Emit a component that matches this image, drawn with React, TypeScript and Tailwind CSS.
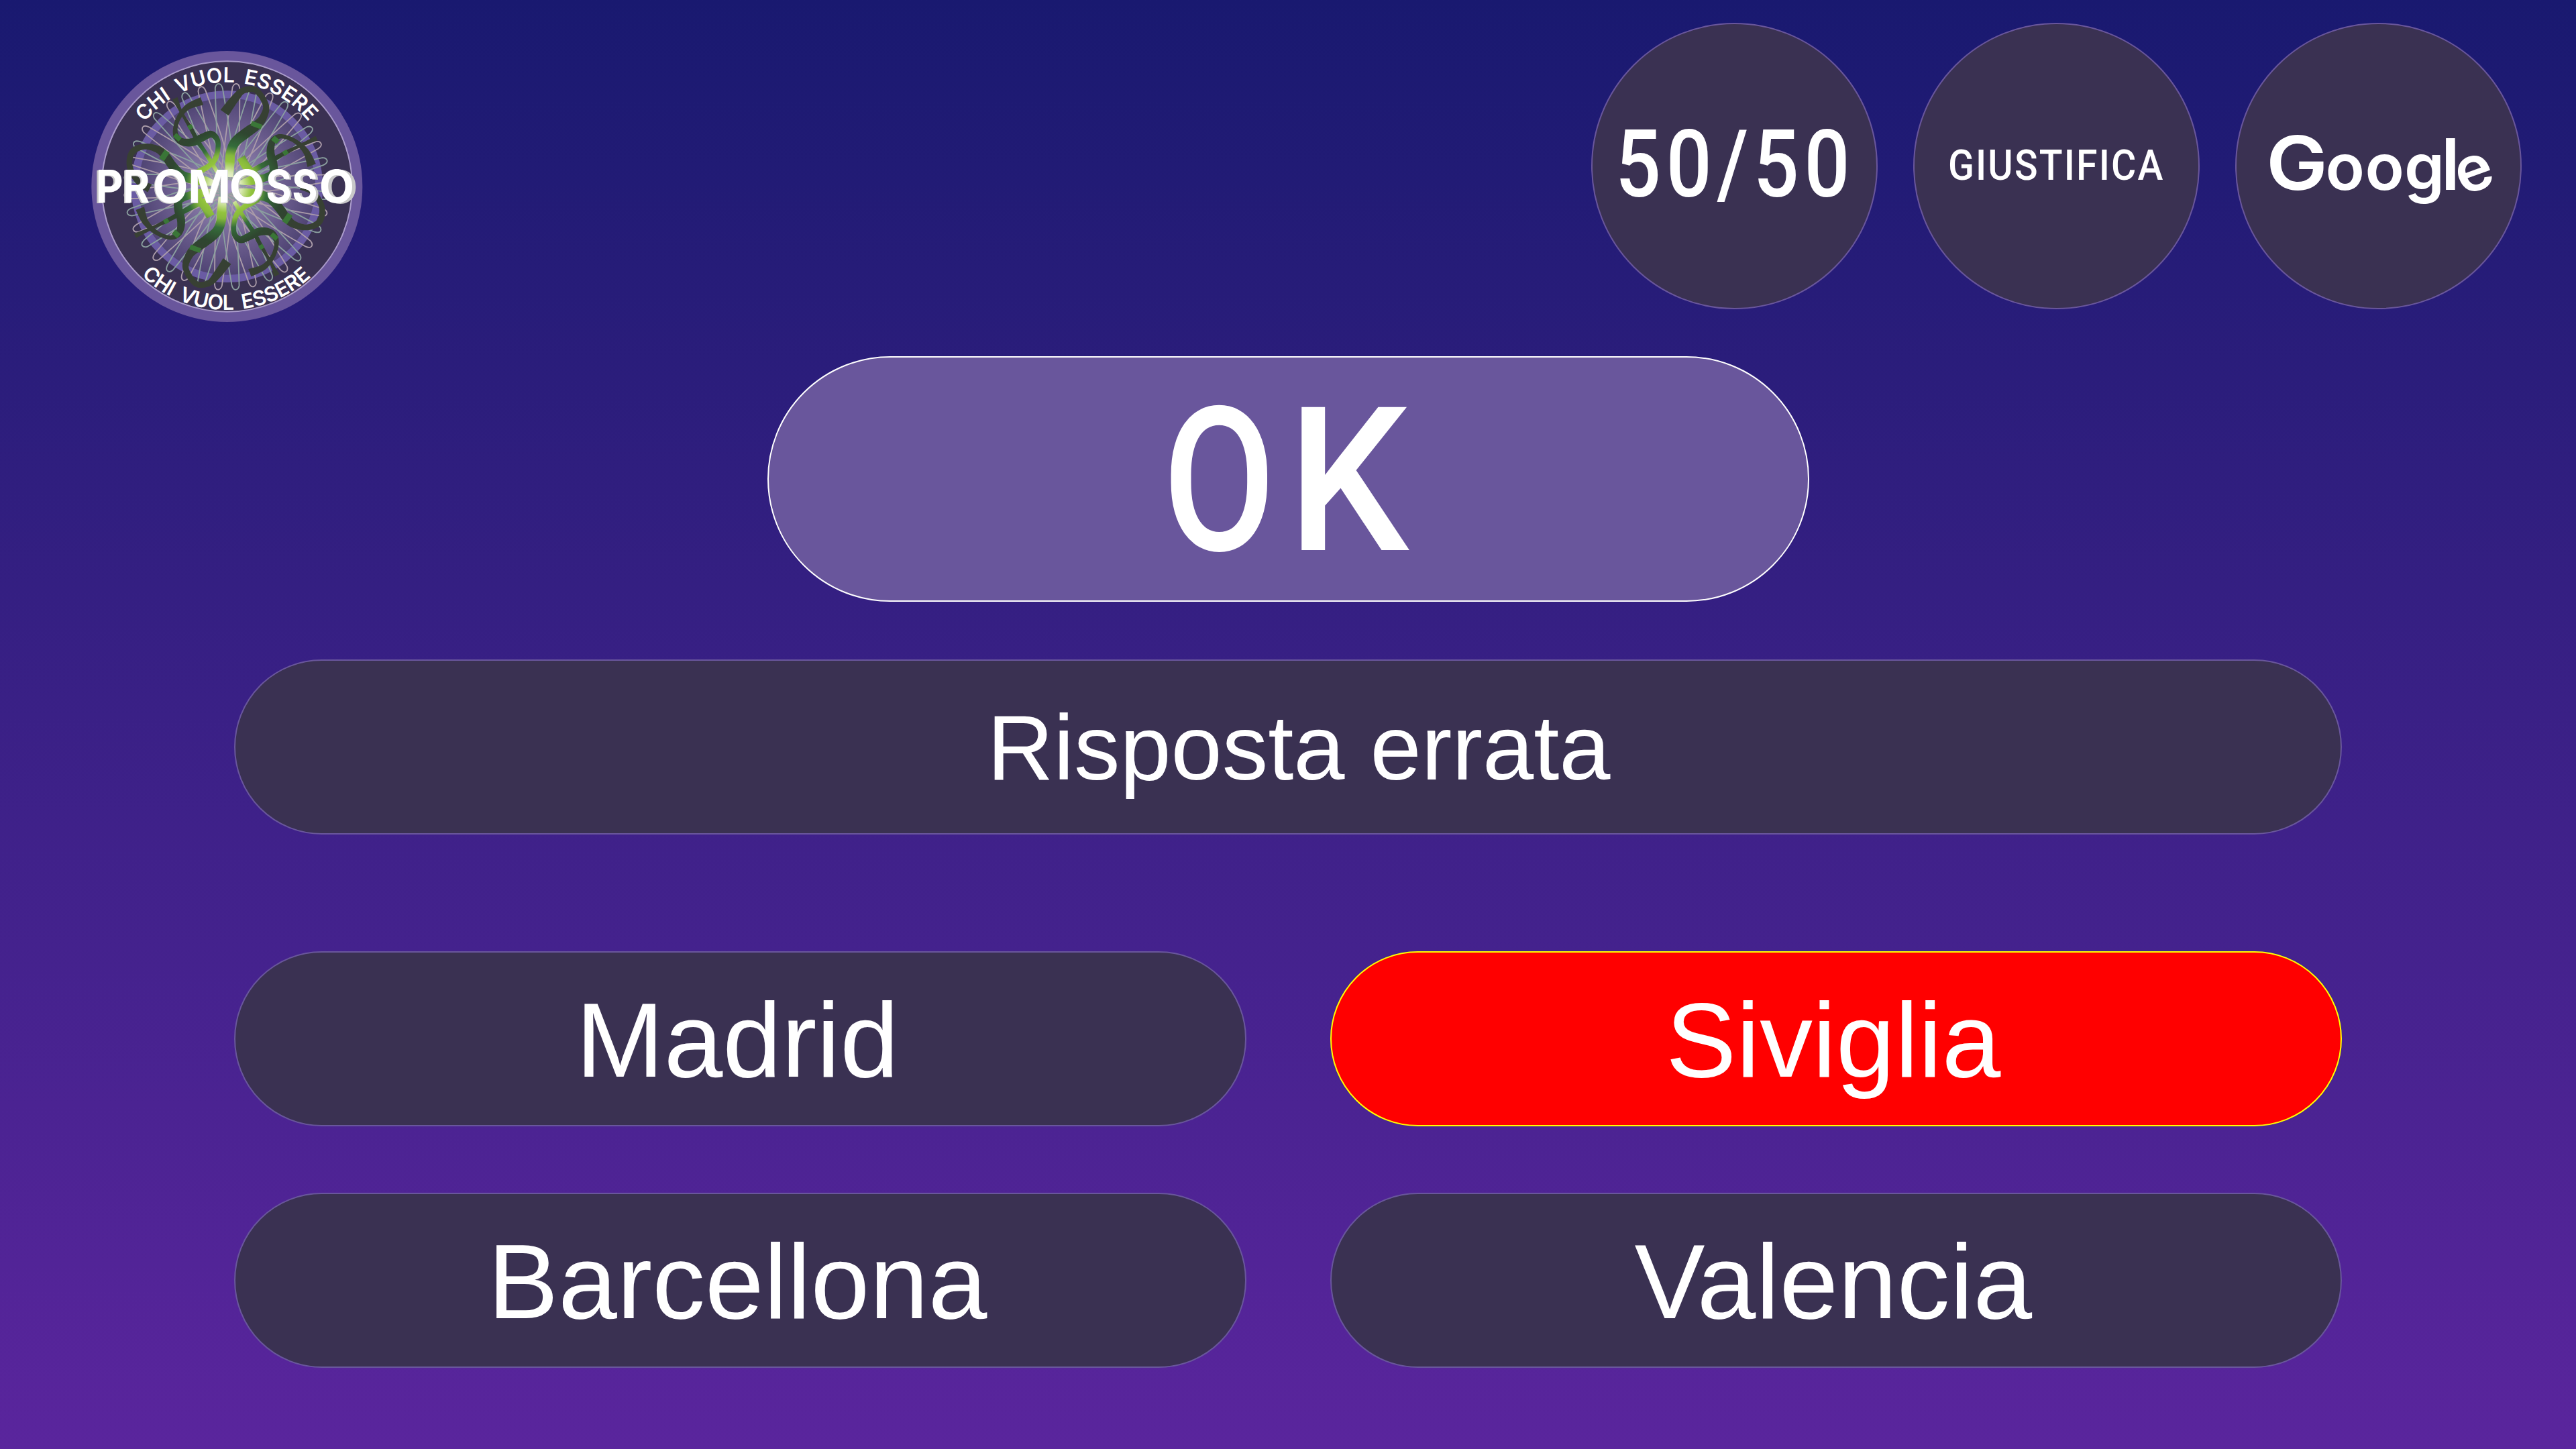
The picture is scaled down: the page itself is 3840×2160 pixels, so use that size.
import type { ReactNode } from "react";

const PETALS = Array.from({ length: 18 }, (_, i) => i);

type Knot = [x: number, y: number, width: number];

/* Half of the emblem's ribbons; the other half is the same set turned by 180 degrees. */
const RIBBONS: Knot[][] = [
  [[644, 324, 44], [690, 262, 36], [728, 225, 28], [785, 224, 26], [829, 290, 27], [817, 345, 34], [788, 380, 42], [740, 415, 46], [692, 455, 44], [672, 500, 42], [668, 545, 42], [666, 612, 34]],
  [[543, 272, 36], [480, 298, 26], [440, 345, 20], [424, 395, 20], [430, 432, 26], [455, 454, 32], [500, 456, 36], [545, 435, 34], [585, 420, 30], [612, 446, 24], [614, 490, 22], [600, 535, 24], [570, 565, 24], [530, 588, 28], [505, 605, 30]],
  [[422, 260, 26], [450, 320, 14], [490, 388, 17], [525, 452, 20], [560, 505, 18], [612, 590, 18]],
  [[310, 662, 40], [262, 635, 28], [225, 580, 26], [220, 530, 26], [240, 492, 28], [290, 475, 26], [345, 488, 32], [378, 515, 38], [410, 560, 40], [450, 602, 42], [500, 620, 44], [560, 630, 40], [620, 645, 10]],
  [[1034, 560, 40], [1010, 500, 28], [965, 455, 20], [915, 432, 18], [880, 433, 22], [856, 458, 30], [850, 505, 36], [862, 555, 38], [860, 595, 36], [820, 616, 34], [760, 628, 40], [700, 640, 10]],
  [[1056, 438, 22], [985, 470, 14], [917, 503, 18], [850, 540, 22], [785, 575, 24], [700, 620, 14]],
  [[718, 524, 38], [745, 570, 38], [785, 608, 36]],
];

/* Bands that cross the ribbons: start and end of each, and its thickness. */
const BANDS: [number, number, number, number, number][] = [
  [764, 371, 810, 388, 22],
  [421, 423, 446, 445, 22],
  [482, 393, 500, 383, 20],
  [388, 496, 362, 534, 26],
  [860, 436, 884, 456, 24],
  [911, 494, 922, 512, 22],
];

function spline(a: number, b: number, c: number, d: number, t: number) {
  return 0.5 * (2 * b + (c - a) * t + (2 * a - 5 * b + 4 * c - d) * t * t + (3 * b - a - 3 * c + d) * t * t * t);
}

/* Outline of a band of varying width along a smooth curve through the knots. */
function ribbonPath(knots: Knot[]) {
  const pts: Knot[] = [];
  for (let i = 0; i < knots.length - 1; i++) {
    const a = knots[Math.max(i - 1, 0)];
    const b = knots[i];
    const c = knots[i + 1];
    const d = knots[Math.min(i + 2, knots.length - 1)];
    for (let s = 0; s < 10; s++) {
      const t = s / 10;
      pts.push([spline(a[0], b[0], c[0], d[0], t), spline(a[1], b[1], c[1], d[1], t), spline(a[2], b[2], c[2], d[2], t)]);
    }
  }
  pts.push(knots[knots.length - 1]);
  const left: string[] = [];
  const right: string[] = [];
  pts.forEach(([x, y, w], i) => {
    const p = pts[Math.max(i - 1, 0)];
    const n = pts[Math.min(i + 1, pts.length - 1)];
    const dx = n[0] - p[0];
    const dy = n[1] - p[1];
    const k = w / 2 / Math.hypot(dx, dy);
    left.push(`${(x - dy * k).toFixed(1)} ${(y + dx * k).toFixed(1)}`);
    right.unshift(`${(x + dy * k).toFixed(1)} ${(y - dx * k).toFixed(1)}`);
  });
  return `M${[...left, ...right].join("L")}Z`;
}

function Ribbons() {
  return (
    <g>
      {RIBBONS.map((knots, i) => (
        <path key={i} d={ribbonPath(knots)} fill="url(#ribbon)" />
      ))}
      {BANDS.map(([x1, y1, x2, y2, w], i) => (
        <line key={i} x1={x1} y1={y1} x2={x2} y2={y2} strokeWidth={w} stroke="#3a7637" />
      ))}
    </g>
  );
}

function Emblem() {
  return (
    <svg className="h-[440px] w-[440px]" viewBox="0 0 1320 1320" role="img" aria-label="Chi vuol essere promosso">
      <defs>
        <radialGradient id="disc" gradientUnits="userSpaceOnUse" cx="655" cy="654" r="400">
          <stop offset="0" stopColor="#aa9cc8" />
          <stop offset="0.35" stopColor="#8578a5" />
          <stop offset="0.7" stopColor="#67598a" />
          <stop offset="1" stopColor="#4f4473" />
        </radialGradient>
        <radialGradient id="ribbon" gradientUnits="userSpaceOnUse" cx="650" cy="656" r="460">
          <stop offset="0" stopColor="#ffffff" />
          <stop offset="0.15" stopColor="#dbeab5" />
          <stop offset="0.25" stopColor="#93c43d" />
          <stop offset="0.31" stopColor="#86b83c" />
          <stop offset="0.4" stopColor="#356d3a" />
          <stop offset="0.55" stopColor="#2f4630" />
          <stop offset="0.75" stopColor="#364033" />
          <stop offset="1" stopColor="#384033" />
        </radialGradient>
        <path id="topArc" d="M 189 654 A 466 466 0 0 1 1121 654" />
        <path id="bottomArc" d="M 103 654 A 552 552 0 0 0 1207 654" />
      </defs>
      <circle cx="655" cy="654" r="606" fill="#69569c" />
      <circle cx="655" cy="654" r="560" fill="#3a3152" stroke="#ab9ccb" strokeWidth="6" />
      <circle cx="655" cy="654" r="412" fill="url(#disc)" stroke="#6a5ba3" strokeWidth="34" />
      <g fill="none" strokeWidth="5.5">
        {PETALS.map((i) => (
          <path
            key={i}
            d="M-15 -445 Q -10 -462 2 -462 Q 14 -462 18 -440 C 26 -330 42 -200 34 0 C 28 200 22 330 15 445 Q 10 462 -2 462 Q -14 462 -18 440 C -26 330 -42 200 -34 0 C -28 -200 -22 -330 -15 -445 Z"
            stroke={i % 2 ? "#8ba09f" : "#ab9ca9"}
            transform={`translate(656 655) rotate(${5 + i * 10})`}
          />
        ))}
      </g>
      <Ribbons />
      <g transform="rotate(180 650 656)">
        <Ribbons />
      </g>
      <g fill="#fff" fontFamily="Inter, sans-serif" fontWeight="600" fontSize="92" wordSpacing="16">
        <text>
          <textPath href="#topArc" startOffset="730" textAnchor="middle" textLength="842">CHI VUOL ESSERE</textPath>
        </text>
        <text>
          <textPath href="#bottomArc" startOffset="863" textAnchor="middle" textLength="838">CHI VUOL ESSERE</textPath>
        </text>
      </g>
      <g fontFamily="Inter, sans-serif" fontWeight="700" fontSize="204">
        <text y="728" fill="#c8c8c8" aria-hidden="true">
          <tspan x="61" textLength="123" lengthAdjust="spacingAndGlyphs">P</tspan>
          <tspan x="183" textLength="122" lengthAdjust="spacingAndGlyphs">R</tspan>
          <tspan x="320 482 669">OMO</tspan>
          <tspan x="836" textLength="115" lengthAdjust="spacingAndGlyphs">S</tspan>
          <tspan x="956" textLength="115" lengthAdjust="spacingAndGlyphs">S</tspan>
          <tspan x="1083">O</tspan>
        </text>
        <text y="726" fill="#fff">
          <tspan x="68" textLength="123" lengthAdjust="spacingAndGlyphs">P</tspan>
          <tspan x="188" textLength="122" lengthAdjust="spacingAndGlyphs">R</tspan>
          <tspan x="324 481 665">OMO</tspan>
          <tspan x="829" textLength="115" lengthAdjust="spacingAndGlyphs">S</tspan>
          <tspan x="946" textLength="115" lengthAdjust="spacingAndGlyphs">S</tspan>
          <tspan x="1067">O</tspan>
        </text>
      </g>
    </svg>
  );
}

function Lifeline({ children }: { children: ReactNode }) {
  return (
    <button className="flex h-[427px] w-[427px] items-center justify-center rounded-full border-2 border-[#69569c] bg-[#3a3152] font-[Roboto,sans-serif] leading-none font-medium text-white">
      {children}
    </button>
  );
}

function GoogleWordmark() {
  return (
    <svg className="h-[427px] w-[427px] shrink-0" viewBox="3332 34 427 427" role="img" aria-label="Google">
      <text fill="#fff" fontFamily="Inter, sans-serif" fontWeight="600" fontSize="111">
        <tspan x="3378" y="283" textLength="92" lengthAdjust="spacingAndGlyphs">G</tspan>
        <tspan x="3466.4 3525.4 3584" y="283" fontSize="96">oog</tspan>
        <tspan x="3639" y="283" fontSize="106">l</tspan>
        <tspan x="3671" y="292" rotate="-20" fontSize="94">e</tspan>
      </text>
    </svg>
  );
}

function Answer({ text, wrong = false }: { text: string; wrong?: boolean }) {
  return (
    <button
      className={
        "flex h-[261px] items-center justify-center rounded-full border-2 pt-[5px] pr-[8px] text-[157.5px] leading-none text-white " +
        (wrong ? "border-[#ffff00] bg-[#ff0000]" : "border-[#69569c] bg-[#3a3152]")
      }
    >
      {text}
    </button>
  );
}

export default function App() {
  return (
    <main className="flex h-[2160px] w-[3840px] flex-col items-center overflow-hidden bg-linear-to-b from-[#191970] to-[#5a259d] font-['Liberation_Sans',Arial,sans-serif]">
      <header className="flex h-[531px] w-full items-start justify-between pr-[81px] pl-[120px]">
        <div className="mt-[60px]">
          <Emblem />
        </div>
        <div className="mt-[34px] flex gap-[53px]">
          <Lifeline>
            <span className="mt-[-4px] -mr-[3px] scale-x-[0.86] text-[139px] tracking-[9px]">50/50</span>
          </Lifeline>
          <Lifeline>
            <span className="mt-[-2px] scale-x-[0.9] text-[63.5px] tracking-[2.4px]">GIUSTIFICA</span>
          </Lifeline>
          <Lifeline>
            <GoogleWordmark />
          </Lifeline>
        </div>
      </header>

      <button className="flex h-[366px] w-[1553px] shrink-0 items-center justify-center rounded-full border-2 border-white bg-[#69569c] pt-[8px] pr-[22px] font-[Roboto,sans-serif] text-[300px] leading-none font-medium text-white">
        <span className="inline-block scale-x-[0.81]">O</span>
        <span className="-ml-[6px] inline-block scale-x-[0.95]">K</span>
      </button>

      <section className="mt-[86px] flex h-[261px] w-[3142px] shrink-0 items-center justify-center rounded-full border-2 border-[#69569c] bg-[#3a3152] pt-[2px] pl-[32px] text-[137px] leading-none text-white">
        Risposta errata
      </section>

      <section className="mt-[174px] grid w-[3142px] grid-cols-2 gap-x-[125px] gap-y-[99px]">
        <Answer text="Madrid" />
        <Answer text="Siviglia" wrong />
        <Answer text="Barcellona" />
        <Answer text="Valencia" />
      </section>
    </main>
  );
}
